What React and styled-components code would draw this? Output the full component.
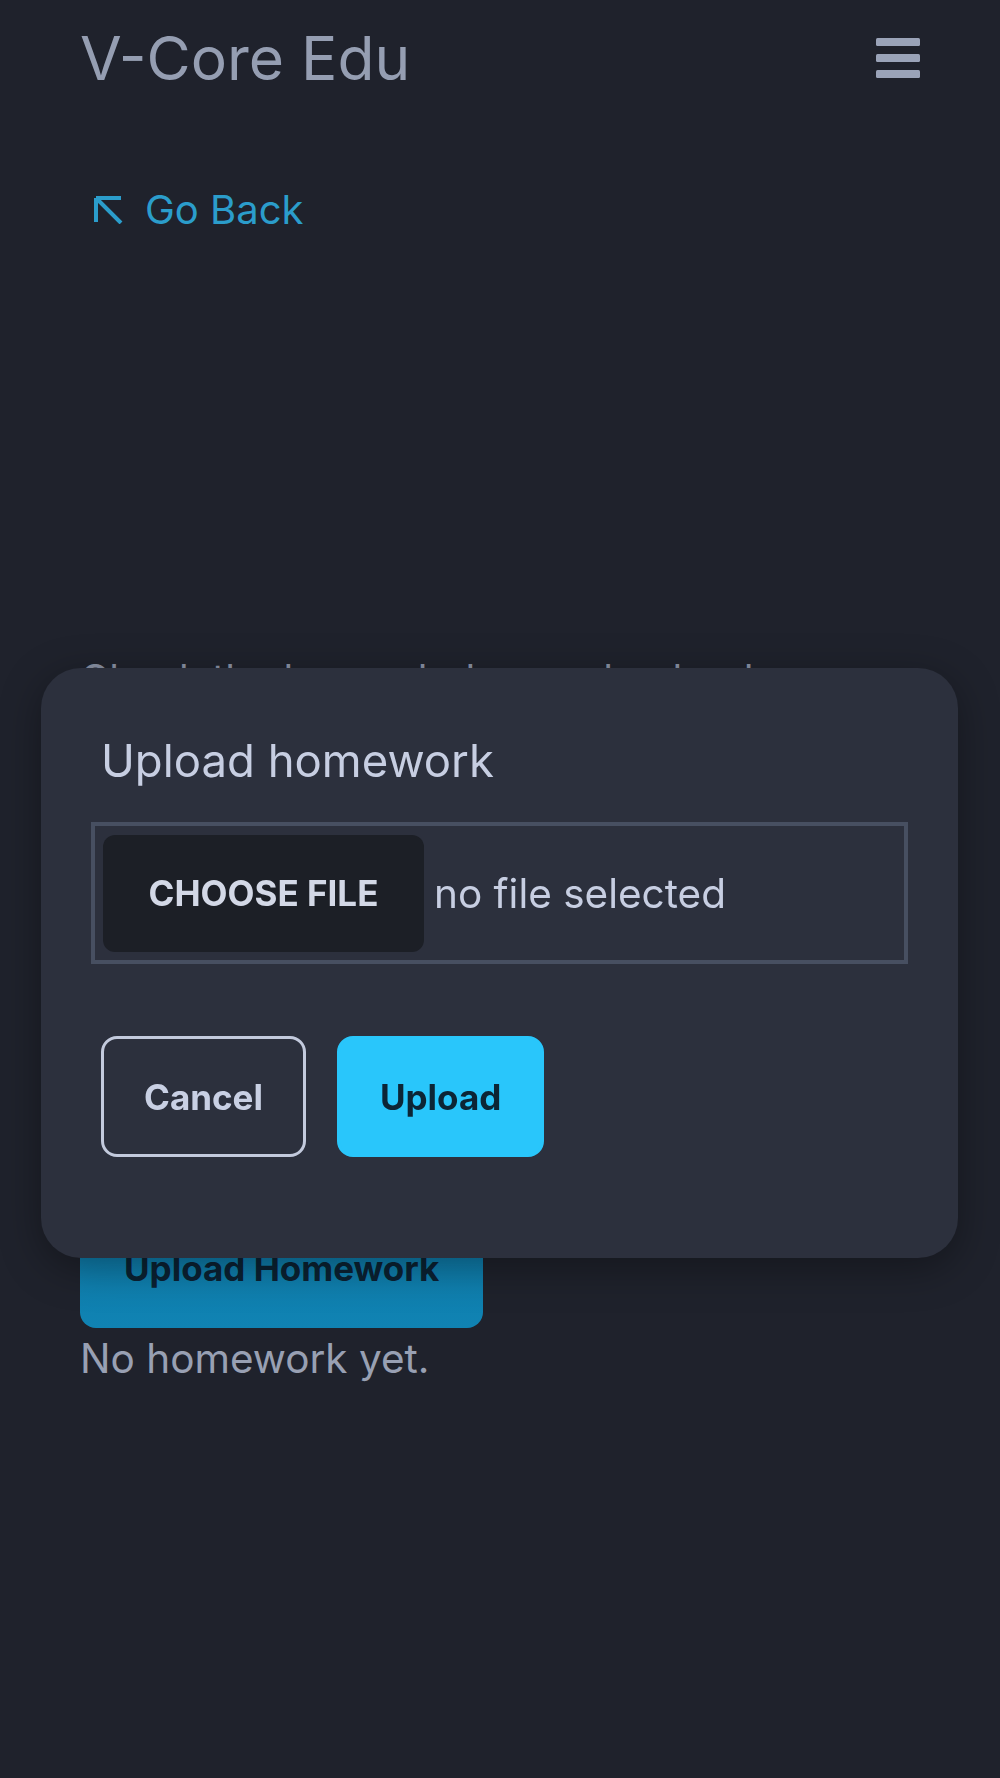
import React from "react";
import styled, { createGlobalStyle } from "styled-components";

const GlobalStyle = createGlobalStyle`
  * {
    box-sizing: border-box;
  }
  html, body {
    margin: 0;
    padding: 0;
    background: #1f222c;
  }
  body {
    font-family: Inter, "Noto Sans", sans-serif;
    min-height: 1778px;
  }
`;

const Page = styled.div`
  padding: 13px 80px 0;
  min-height: 1778px;
  background: #1f222c;
`;

const Header = styled.header`
  display: flex;
  align-items: center;
  justify-content: space-between;
  height: 90px;
`;

const Brand = styled.h1`
  margin: 0;
  font-size: 60.5px;
  font-weight: 400;
  line-height: 90px;
  color: #959eb2;
`;

const MenuButton = styled.button`
  display: flex;
  padding: 0;
  border: none;
  background: none;
  color: #9aa3b8;
`;

const BackLink = styled.a`
  display: inline-flex;
  align-items: center;
  gap: 22px;
  margin: 77px 0 0 13px;
  font-size: 40px;
  line-height: 60px;
  color: #2b9dcb;
  text-decoration: none;
`;

const Lesson = styled.section`
  margin-top: 409px;
  display: flex;
  flex-direction: column;
  align-items: flex-start;
`;

const Description = styled.p`
  margin: 0;
  font-size: 40px;
  line-height: 60px;
  color: #8a92a5;
  height: 558px;
`;

const ActionButton = styled.button`
  height: 121px;
  padding: 0 40px;
  border-radius: 16px;
  font-family: inherit;
  font-size: 35px;
  font-weight: 700;
  cursor: pointer;
  ${({ $variant }) =>
    $variant === "outline" &&
    `
    background: transparent;
    color: #c9d0e4;
    border: 3px solid #c3cadd;
  `}
  ${({ $variant }) =>
    $variant === "primary" &&
    `
    background: #29c6fb;
    color: #0c2535;
    border: 3px solid #29c6fb;
  `}
  ${({ $variant }) =>
    $variant === "page" &&
    `
    padding: 0 44px;
    background: linear-gradient(#0e7aa8, #1083b3);
    color: #0b2233;
    border: none;
  `}
`;

const EmptyNote = styled.p`
  margin: 1px 0 0;
  font-size: 40.5px;
  line-height: 60px;
  color: #98a0b3;
`;

const Modal = styled.div`
  position: fixed;
  top: 668px;
  left: 41px;
  right: 42px;
  height: 590px;
  padding: 65px 50px 60px;
  background: #2c303d;
  border-radius: 40px;
  box-shadow: 0 10px 40px rgba(0, 0, 0, 0.35);
`;

const ModalTitle = styled.h2`
  margin: 0 0 33px 10px;
  font-size: 45.5px;
  font-weight: 400;
  line-height: 56px;
  color: #c7cee2;
`;

const FileField = styled.label`
  display: flex;
  align-items: center;
  gap: 10px;
  height: 142px;
  padding: 8px;
  border: 4px solid #474f61;
`;

const ChooseButton = styled.span`
  display: flex;
  align-items: center;
  justify-content: center;
  width: 321px;
  height: 117px;
  border-radius: 12px;
  background: #1c1f26;
  color: #d3d8e6;
  font-size: 35px;
  font-weight: 700;
`;

const FileName = styled.span`
  font-size: 40.5px;
  color: #c7cee2;
`;

const ButtonRow = styled.div`
  display: flex;
  gap: 31px;
  margin: 72px 0 0 10px;
`;

const HiddenInput = styled.input`
  display: none;
`;

export default function App() {
  return (
    <>
      <GlobalStyle />
      <Page>
        <Header>
          <Brand>V-Core Edu</Brand>
          <MenuButton aria-label="Menu">
            <svg width="44" height="40" viewBox="0 0 44 40">
              <rect x="0" y="0" width="44" height="8" rx="1.5" fill="currentColor" />
              <rect x="0" y="16" width="44" height="8" rx="1.5" fill="currentColor" />
              <rect x="0" y="32" width="44" height="8" rx="1.5" fill="currentColor" />
            </svg>
          </MenuButton>
        </Header>

        <BackLink href="#">
          <svg width="30" height="28" viewBox="0 0 30 28" fill="none">
            <path d="M3 2H28 M3 2V26 M3 2L28 27" stroke="currentColor" strokeWidth="4" />
          </svg>
          Go Back
        </BackLink>

        <Lesson>
          <Description>
            Check the lesson below and upload your homework in time.
          </Description>
          <ActionButton $variant="page">Upload Homework</ActionButton>
          <EmptyNote>No homework yet.</EmptyNote>
        </Lesson>
      </Page>

      <Modal role="dialog">
        <ModalTitle>Upload homework</ModalTitle>
        <FileField>
          <HiddenInput type="file" />
          <ChooseButton>CHOOSE FILE</ChooseButton>
          <FileName>no file selected</FileName>
        </FileField>
        <ButtonRow>
          <ActionButton $variant="outline">Cancel</ActionButton>
          <ActionButton $variant="primary">Upload</ActionButton>
        </ButtonRow>
      </Modal>
    </>
  );
}
